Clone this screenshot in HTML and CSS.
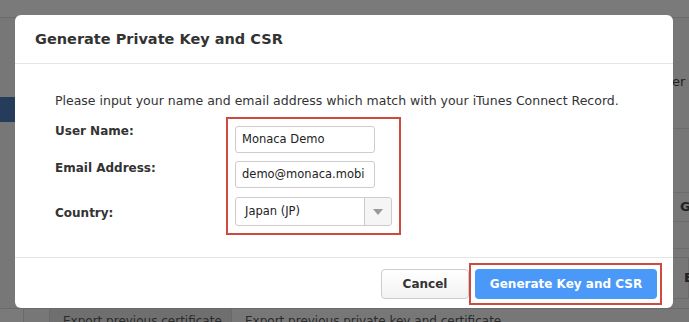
FILE: index.html
```html
<!DOCTYPE html>
<html lang="en">
<head>
    <meta charset="UTF-8">
    <title>Generate Private Key and CSR</title>
    <link rel="stylesheet" href="styles.css">
</head>
<body>
    <!-- page behind the overlay -->
    <div class="page">
        <div class="topbar"></div>
        <div class="main">
            <div class="sidebar">
                <div class="nav-item"></div>
            </div>
            <div class="content"></div>
            <div class="side-col">
                <div class="side-text">er</div>
                <div class="side-row"></div>
                <div class="side-row bold">G</div>
                <div class="side-row short"></div>
                <div class="side-box">E</div>
            </div>
        </div>
        <div class="table-row">
            <div class="cell c1"></div>
            <div class="cell c2"></div>
            <div class="cell c3">Export previous certificate</div>
            <div class="cell c4">Export previous private key and certificate.</div>
        </div>
    </div>

    <!-- Modal -->
    <div class="modal">
        <div class="modal-header">
            <h3 class="modal-title">Generate Private Key and CSR</h3>
        </div>
        <div class="modal-body">
            <p class="intro">Please input your name and email address which match with your iTunes Connect Record.</p>
            <div class="form">
                <div class="labels">
                    <label class="lbl l1">User Name:</label>
                    <label class="lbl l2">Email Address:</label>
                    <label class="lbl l3">Country:</label>
                </div>
                <div class="fields highlight">
                    <div class="input">Monaca Demo</div>
                    <div class="input">demo@monaca.mobi</div>
                    <div class="select">
                        <span class="select-value">Japan (JP)</span>
                        <span class="select-arrow"><span class="tri"></span></span>
                    </div>
                </div>
            </div>
        </div>
        <div class="modal-footer">
            <button class="btn btn-cancel">Cancel</button>
            <div class="highlight btn-wrap">
                <button class="btn btn-primary">Generate Key and CSR</button>
            </div>
        </div>
    </div>
</body>
</html>
```

FILE: styles.css
```css
body {
    margin: 0;
    width: 689px;
    height: 322px;
    overflow: hidden;
    position: relative;
    background: #777;
    font-family: "DejaVu Sans", Verdana, sans-serif;
    color: #333;
}

/* background page */
.page {
    display: flex;
    flex-direction: column;
    height: 322px;
}
.topbar {
    height: 17px;
    background: #7a7a7a;
    border-bottom: 1px solid #6b6b6b;
}
.main {
    display: flex;
    height: 290px;
}
.sidebar {
    width: 15px;
}
.nav-item {
    margin-top: 79px;
    height: 25px;
    background: #253d5b;
}
.content {
    flex: 1;
}
.side-col {
    width: 17px;
    color: #222;
    font-size: 13px;
    white-space: nowrap;
}
.side-text {
    margin-top: 56px;
    height: 54px;
    border-bottom: 1px solid #6c6c6c;
}
.side-row {
    height: 63px;
    border-bottom: 1px solid #6c6c6c;
}
.side-row.bold {
    height: 28px;
    line-height: 28px;
    font-weight: bold;
    padding-left: 8px;
}
.side-row.short {
    height: 26px;
}
.side-box {
    margin-left: -5px;
    margin-top: 8px;
    height: 40px;
    line-height: 40px;
    padding-left: 16px;
    border: 1px solid #6c6c6c;
    border-radius: 4px 0 0 4px;
    font-weight: bold;
}
.table-row {
    display: flex;
    height: 14px;
    font-size: 12px;
    color: #2a2a2a;
    line-height: 24px;
    white-space: nowrap;
    overflow: hidden;
}
.cell {
    border-left: 1px solid #6a6a6a;
    border-top: 1px solid #6a6a6a;
}
.c1 {
    width: 23px;
    border-left: none;
    background: #7a7a7a;
}
.c2 {
    width: 25px;
    background: #777;
}
.c3 {
    width: 168px;
    padding-left: 13px;
    background: #6f6f6f;
    overflow: hidden;
}
.c4 {
    flex: 1;
    padding-left: 13px;
    background: #777;
}

/* modal */
.modal {
    position: absolute;
    left: 15px;
    top: 15px;
    width: 658px;
    height: 293px;
    background: #fff;
    border-radius: 6px;
    display: flex;
    flex-direction: column;
}
.modal-header {
    height: 48px;
    border-bottom: 1px solid #e5e5e5;
    padding: 0 20px;
    display: flex;
    align-items: center;
}
.modal-title {
    margin: 0;
    font-size: 14.5px;
    font-weight: bold;
    color: #333;
}
.modal-body {
    height: 193px;
    border-bottom: 1px solid #e5e5e5;
    padding: 0 40px;
}
.intro {
    margin: 28px 0 0;
    font-size: 12.5px;
    line-height: 18px;
    white-space: nowrap;
}
.form {
    display: flex;
    margin-top: 7px;
}
.labels {
    width: 171px;
    display: flex;
    flex-direction: column;
}
.lbl {
    font-size: 12px;
    font-weight: bold;
    line-height: 18px;
}
.l1 { margin-top: 5px; }
.l2 { margin-top: 19px; }
.l3 { margin-top: 27px; }

.highlight {
    border: 2px solid #cf4a3e;
}
.fields {
    padding: 7px;
    width: 157px;
    display: flex;
    flex-direction: column;
}
.input {
    width: 140px;
    height: 27px;
    box-sizing: border-box;
    border: 1px solid #ccc;
    border-radius: 3px;
    padding: 0 6px;
    font-size: 11.5px;
    line-height: 25px;
    color: #222;
    white-space: nowrap;
    margin-bottom: 8px;
}
.input + .input {
    margin-bottom: 9px;
}
.select {
    width: 157px;
    height: 29px;
    box-sizing: border-box;
    border: 1px solid #ccc;
    border-radius: 3px;
    display: flex;
    font-size: 11.5px;
    color: #222;
}
.select-value {
    flex: 1;
    padding-left: 9px;
    line-height: 27px;
}
.select-arrow {
    width: 26px;
    border-left: 1px solid #ccc;
    background: #f5f5f5;
    display: flex;
    align-items: center;
    justify-content: center;
    border-radius: 0 3px 3px 0;
}
.tri {
    width: 0;
    height: 0;
    border-left: 5px solid transparent;
    border-right: 5px solid transparent;
    border-top: 6px solid #999;
}

.modal-footer {
    flex: 1;
    display: flex;
    justify-content: flex-end;
    align-items: flex-start;
    padding: 5px 11px 0 0;
}
.btn {
    font-family: "DejaVu Sans", Verdana, sans-serif;
    font-size: 12px;
    font-weight: bold;
    height: 30px;
    border-radius: 4px;
    cursor: pointer;
}
.btn-cancel {
    margin-top: 6px;
    width: 88px;
    background: linear-gradient(#fff, #f2f2f2);
    border: 1px solid #ccc;
    color: #333;
}
.btn-wrap {
    padding: 4px 3px 4px 4px;
}
.btn-primary {
    width: 182px;
    background: #4a98f7;
    border: none;
    color: #fff;
}
```
